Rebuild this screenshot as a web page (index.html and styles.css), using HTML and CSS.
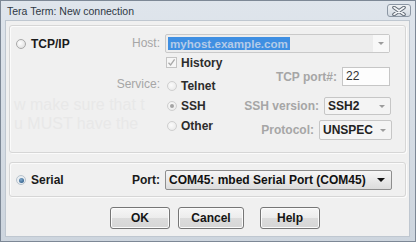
FILE: index.html
```html
<!DOCTYPE html>
<html lang="en">
<head>
  <meta charset="UTF-8">
  <title>Tera Term: New connection</title>
  <link rel="stylesheet" href="styles.css">
</head>
<body>
  <div class="window">
    <div class="titlebar">
      <span class="title">Tera Term: New connection</span>
      <span class="close">
        <svg width="14" height="10" viewBox="0 0 14 10">
          <path d="M2 1.5 L12 8.5 M12 1.5 L2 8.5" stroke="#5f6873" stroke-width="3.6" stroke-linecap="round"/>
          <path d="M2 1.5 L12 8.5 M12 1.5 L2 8.5" stroke="#f4f6f8" stroke-width="1.6" stroke-linecap="round"/>
        </svg>
      </span>
    </div>

    <div class="client">
      <div class="group group-tcp">
        <div class="ghost">w make sure that t<br>u MUST have the</div>

        <label class="main"><span class="radio"></span>TCP/IP</label>
        <span class="field-label dim">Host:</span>
        <div class="combo">
          <span class="combo-text"><span class="highlight">myhost.example.com</span></span>
          <span class="combo-drop"><span class="arrow"></span></span>
        </div>

        <span></span>
        <span class="field-label dim service">Service:</span>
        <div class="service-area">
          <div class="left-opts">
            <label class="opt history">
              <span class="checkbox">
                <svg width="9" height="9" viewBox="0 0 9 9"><path d="M1.5 4.8 L3.6 7 L7.6 1.4" stroke="#a9a9a9" stroke-width="1.3" fill="none"/></svg>
              </span>History
            </label>
            <label class="opt telnet"><span class="radio off"></span>Telnet</label>
            <label class="opt"><span class="radio off dot-gray"></span>SSH</label>
            <label class="opt"><span class="radio off"></span>Other</label>
          </div>
          <div class="right-opts">
            <div class="row row-port">
              <span class="dim bold">TCP port#:</span>
              <span class="input port-input">22</span>
            </div>
            <div class="row row-ver">
              <span class="dim bold">SSH version:</span>
              <span class="select ver-select">SSH2<span class="arrow"></span></span>
            </div>
            <div class="row row-proto">
              <span class="dim bold">Protocol:</span>
              <span class="select proto-select">UNSPEC<span class="arrow"></span></span>
            </div>
          </div>
        </div>
      </div>

      <div class="group group-serial">
        <label class="main"><span class="radio on"></span>Serial</label>
        <span class="field-label port-label">Port:</span>
        <span class="select port-select">COM45: mbed Serial Port (COM45)<span class="arrow"></span></span>
      </div>

      <div class="buttons">
        <button class="btn btn-ok">OK</button>
        <button class="btn btn-cancel">Cancel</button>
        <button class="btn btn-help">Help</button>
      </div>
    </div>
  </div>
</body>
</html>
```

FILE: styles.css
```css
body {
  margin: 0;
  font-family: "Liberation Sans", Arial, sans-serif;
  font-size: 12px;
}
.window {
  width: 416px;
  height: 242px;
  box-sizing: border-box;
  border: 1px solid #7d8896;
  background: linear-gradient(to bottom, #dfe5ec, #cdd5de);
  padding: 0 5px 4px 4px;
  display: flex;
  flex-direction: column;
  overflow: hidden;
}
.titlebar {
  height: 19px;
  flex: none;
  display: flex;
  align-items: center;
  justify-content: space-between;
}
.title {
  padding-left: 2px;
  font-size: 10.5px;
  color: #2e3844;
}
.close {
  width: 24px;
  height: 13px;
  margin-right: -1px;
  box-sizing: border-box;
  border: 1px solid #8c97a4;
  border-radius: 3px;
  background: linear-gradient(to bottom, #eef1f4, #d3dae2);
  display: flex;
  align-items: center;
  justify-content: center;
}
.client {
  flex: 1;
  background: #f0f0f0;
  border: 1px solid #bfc7d0;
  padding: 4px 3px 0;
}
.group {
  border: 1px solid #d6d6d6;
  border-radius: 3px;
  box-shadow: inset 1px 1px 0 #fbfbfb, 1px 1px 0 #fbfbfb;
  box-sizing: border-box;
}
.group-tcp {
  position: relative;
  height: 128px;
  padding: 8px 15px 0 6px;
  display: grid;
  grid-template-columns: 92px 47px 1fr;
  grid-template-rows: 19px auto;
  column-gap: 5px;
}
.ghost {
  position: absolute;
  left: 4px;
  top: 69px;
  white-space: nowrap;
  font-size: 16px;
  line-height: 19px;
  color: #e8e8e8;
  pointer-events: none;
}
.main {
  display: flex;
  align-items: center;
  gap: 5px;
  height: 19px;
  font-weight: bold;
  color: #1b1b1b;
}
.dim {
  color: #a6a6a6;
}
.bold {
  font-weight: bold;
}
.field-label {
  text-align: right;
  line-height: 19px;
  white-space: nowrap;
}
.service {
  margin-top: 22px;
  line-height: 18px;
  height: 18px;
  align-self: start;
}
.radio {
  width: 10px;
  height: 10px;
  box-sizing: border-box;
  border-radius: 50%;
  border: 1px solid #a9a9a9;
  background: radial-gradient(circle at 40% 40%, #ffffff, #d9d9d9);
  display: flex;
  align-items: center;
  justify-content: center;
  flex: none;
}
.radio.off {
  border-color: #cfcfcf;
  background: radial-gradient(circle at 40% 40%, #fbfbfb, #e6e6e6);
}
.radio.dot-gray::after {
  content: "";
  width: 4px;
  height: 4px;
  border-radius: 50%;
  background: #a4a4a4;
}
.radio.on {
  border-color: #b9c3cc;
  background: #e9eef2;
}
.radio.on::after {
  content: "";
  width: 5px;
  height: 5px;
  border-radius: 50%;
  background: radial-gradient(circle at 40% 35%, #7fa8cc, #1f4d78);
}
.combo {
  display: flex;
  box-sizing: border-box;
  border: 1px solid #c9c9c9;
  border-radius: 2px;
  background: #ededed;
}
.combo-text {
  flex: 1;
  padding: 2px 0 0 2px;
}
.highlight {
  display: inline-block;
  height: 13px;
  line-height: 13px;
  padding: 0 2px 0 2px;
  background: #3f8fe2;
  color: #b4cbe8;
  font-weight: bold;
  font-size: 11.6px;
}
.combo-drop {
  width: 16px;
  background: #f8f8f8;
  display: flex;
  align-items: center;
  justify-content: center;
}
.arrow {
  width: 0;
  height: 0;
  border-left: 3px solid transparent;
  border-right: 3px solid transparent;
  border-top: 3px solid #9c9c9c;
}
.service-area {
  display: flex;
}
.left-opts {
  width: 78px;
  flex: none;
  padding-top: 3px;
  display: flex;
  flex-direction: column;
}
.opt {
  display: flex;
  align-items: center;
  gap: 4px;
  height: 20px;
  padding-left: 2px;
  font-weight: bold;
  color: #2c2c2c;
}
.opt.history {
  height: 13px;
  padding-left: 1px;
}
.opt.telnet {
  margin-top: 7px;
}
.checkbox {
  width: 11px;
  height: 11px;
  box-sizing: border-box;
  border: 1px solid #c4c4c4;
  background: #f6f6f6;
  display: flex;
  align-items: center;
  justify-content: center;
}
.right-opts {
  flex: 1;
  display: flex;
  flex-direction: column;
  align-items: flex-end;
}
.row {
  display: flex;
  align-items: center;
  gap: 5px;
  white-space: nowrap;
  flex: none;
}
.row-port {
  margin-top: 14px;
}
.row-ver {
  margin-top: 11px;
  margin-right: -1px;
}
.row-proto {
  margin-top: 5px;
  margin-right: -2px;
}
.input {
  box-sizing: border-box;
  border: 1px solid #c6c6c6;
  background: #fdfdfd;
  color: #333;
  padding-left: 3px;
}
.port-input {
  width: 48px;
  height: 19px;
  line-height: 17px;
}
.select {
  display: flex;
  align-items: center;
  justify-content: space-between;
  box-sizing: border-box;
  border: 1px solid #c6c6c6;
  border-radius: 2px;
  background: #f4f4f4;
  padding: 0 5px 0 3px;
  font-weight: bold;
  color: #222;
  flex: none;
}
.ver-select {
  width: 67px;
  height: 18px;
}
.proto-select {
  width: 73px;
  height: 20px;
}
.group-serial {
  margin-top: 9px;
  height: 35px;
  padding: 7px 13px 0 6px;
  display: grid;
  grid-template-columns: 92px 47px 1fr;
  column-gap: 5px;
  grid-template-rows: 20px;
  align-items: center;
}
.group-serial .main {
  height: 20px;
}
.port-label {
  font-weight: bold;
  color: #1b1b1b;
  line-height: 20px;
}
.port-select {
  height: 20px;
  border-color: #8e8e8e;
  background: linear-gradient(to bottom, #f6f6f6, #dcdcdc);
  color: #111;
  padding-right: 6px;
}
.port-select .arrow {
  border-left-width: 4px;
  border-right-width: 4px;
  border-top: 4px solid #111;
}
.buttons {
  display: flex;
  margin-top: 10px;
  padding-left: 101px;
}
.btn {
  height: 22px;
  box-sizing: border-box;
  border: 1px solid #767676;
  border-radius: 3px;
  background: linear-gradient(to bottom, #f6f6f6 0%, #ececec 50%, #dcdcdc 51%, #d6d6d6 100%);
  box-shadow: inset 0 0 0 1px #fbfbfb;
  font-family: "Liberation Sans", Arial, sans-serif;
  font-size: 12px;
  font-weight: bold;
  color: #151515;
  padding: 0;
}
.btn-ok {
  width: 60px;
}
.btn-cancel {
  width: 66px;
  margin-left: 8px;
}
.btn-help {
  width: 60px;
  margin-left: 16px;
}
```
